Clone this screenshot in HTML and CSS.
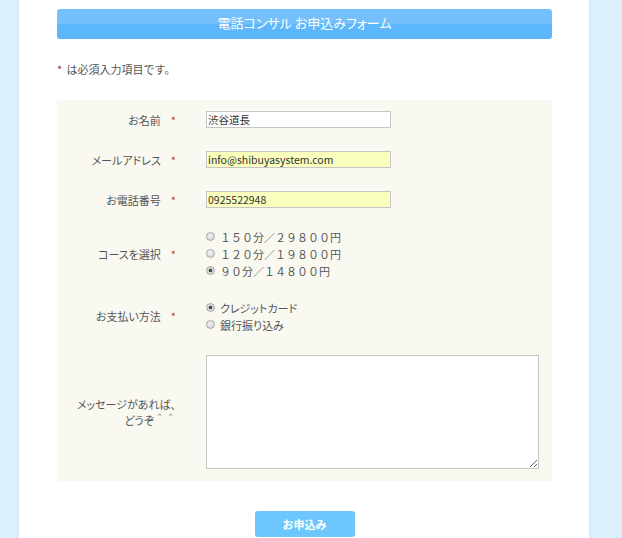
FILE: index.html
```html
<!DOCTYPE html>
<html lang="ja">
<head>
  <meta charset="UTF-8" />
  <meta name="viewport" content="width=device-width, initial-scale=1.0" />
  <title>電話コンサル お申込みフォーム</title>
  <link rel="stylesheet" href="styles.css">
</head>
<body>
  <div class="page">
    <h1 class="form-title">電話コンサル お申込みフォーム</h1>
    <p class="note"><span class="req">*</span> は必須入力項目です。</p>

    <div class="form-box">
      <div class="form-row">
        <label class="form-label" for="name">お名前<span class="req">*</span></label>
        <div class="form-field"><input type="text" id="name" class="text" value="渋谷道長" /></div>
      </div>
      <div class="form-row">
        <label class="form-label" for="mail">メールアドレス<span class="req">*</span></label>
        <div class="form-field"><input type="text" id="mail" class="text filled" value="info@shibuyasystem.com" /></div>
      </div>
      <div class="form-row">
        <label class="form-label" for="tel">お電話番号<span class="req">*</span></label>
        <div class="form-field"><input type="text" id="tel" class="text filled" value="0925522948" /></div>
      </div>
      <div class="form-row course">
        <div class="form-label">コースを選択<span class="req">*</span></div>
        <div class="form-field">
          <label class="choice"><input type="radio" name="course" /> １５０分／２９８００円</label>
          <label class="choice"><input type="radio" name="course" /> １２０分／１９８００円</label>
          <label class="choice"><input type="radio" name="course" checked /> ９０分／１４８００円</label>
        </div>
      </div>
      <div class="form-row pay">
        <div class="form-label">お支払い方法<span class="req">*</span></div>
        <div class="form-field">
          <label class="choice kana"><input type="radio" name="pay" checked /> クレジットカード</label>
          <label class="choice kana"><input type="radio" name="pay" /> 銀行振り込み</label>
        </div>
      </div>
      <div class="form-row">
        <label class="form-label" for="msg">メッセージがあれば、<br>どうぞ<span class="smile">＾＾</span></label>
        <div class="form-field"><textarea id="msg" class="message"></textarea></div>
      </div>
    </div>

    <div class="submit-wrap">
      <button class="submit">お申込み</button>
    </div>
  </div>
</body>
</html>
```

FILE: styles.css
```css
body {
  margin: 0;
  background: #dbeffd;
  font-family: "Noto Sans CJK JP", "Noto Sans", sans-serif;
  font-size: 11px;
  color: #555;
}
.page {
  width: 495px;
  min-height: 538px;
  margin: 0 0 0 19px;
  padding: 9px 37px 0 38px;
  background: #fff;
  box-shadow: 0 0 2px 1px #cfe5f7;
  box-sizing: content-box;
}
.form-title {
  margin: 0;
  height: 30px;
  line-height: 28px;
  border-radius: 3px;
  background: linear-gradient(#75c0fa 0, #75c0fa 50%, #5bb6fc 50%, #5bb6fc 100%);
  color: #fff;
  font-size: 13px;
  font-weight: normal;
  text-align: center;
  font-feature-settings: "palt";
}
.note {
  margin: 22px 0 23px;
  height: 16px;
  line-height: 16px;
}
.req {
  color: #c0392b;
  font-size: 11px;
  line-height: 0;
  margin-left: 10px;
}
.note .req {
  margin: 0 2px 0 0;
  color: #8a3a2a;
}
.form-box {
  background: #f9f9f1;
}
.form-row {
  display: flex;
  align-items: center;
  padding: 11px 0 12px;
}
.form-row.course {
  padding: 8px 0 10px;
}
.form-row.pay {
  padding: 10px 0 11px;
}
.form-label {
  width: 119px;
  padding-right: 30px;
  text-align: right;
  line-height: 16px;
  flex-shrink: 0;
  font-feature-settings: "palt";
}
.form-label .smile {
  font-feature-settings: normal;
}
.form-field {
  flex: 1;
}
input.text {
  display: block;
  width: 185px;
  height: 17px;
  box-sizing: border-box;
  margin: 0;
  padding: 0 1px;
  border: 1px solid #c6c6c6;
  background: #fff;
  font-family: "Noto Sans CJK JP", "Noto Sans", sans-serif;
  font-size: 10.5px;
  color: #333;
}
input.text.filled {
  background: #faffbd;
}
.choice {
  display: flex;
  align-items: center;
  height: 17px;
  color: #555;
}
.choice.kana {
  font-feature-settings: "palt";
}
.choice input {
  appearance: none;
  -webkit-appearance: none;
  width: 9px;
  height: 9px;
  margin: 0 5px 0 0;
  border: 1px solid #a9a9a9;
  border-radius: 50%;
  background: radial-gradient(circle at 40% 35%, #f4f4f4 0, #dcdcdc 60%, #c8c8c8 100%);
  box-sizing: border-box;
}
.choice input:checked {
  background: radial-gradient(circle, #4a4a4a 0, #4a4a4a 1.6px, #e0e0e0 2.2px, #cfcfcf 100%);
}
textarea.message {
  display: block;
  width: 333px;
  height: 114px;
  box-sizing: border-box;
  margin: 0;
  border: 1px solid #c6c6c6;
  background: #fff;
}
.submit-wrap {
  text-align: center;
  margin-top: 30px;
}
button.submit {
  width: 100px;
  height: 26px;
  border: none;
  border-radius: 3px;
  background: #6ec7fc;
  color: #fff;
  font-family: "Noto Sans CJK JP", sans-serif;
  font-size: 11px;
  font-weight: bold;
  cursor: pointer;
}
```
